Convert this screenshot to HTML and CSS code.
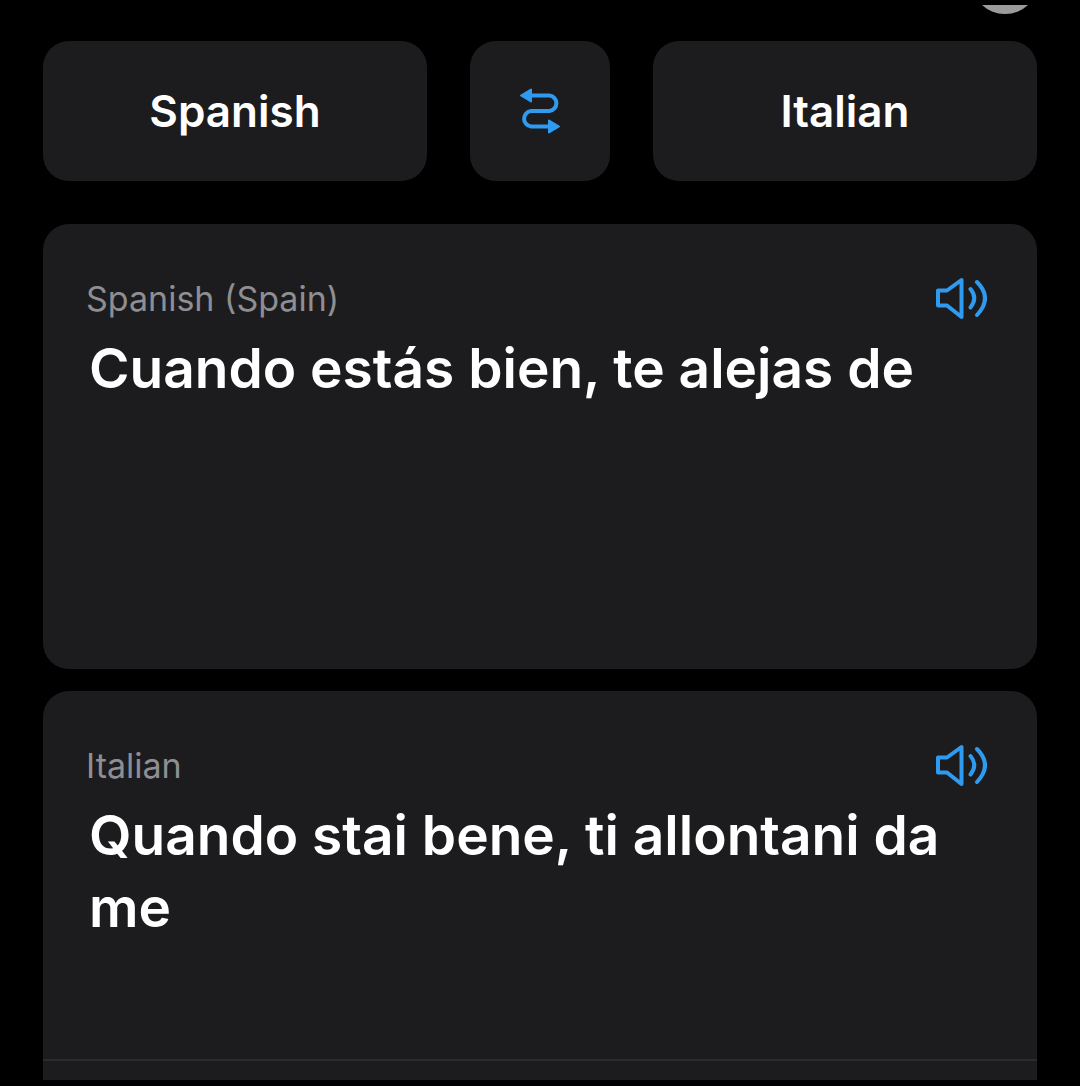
FILE: index.html
```html
<!DOCTYPE html>
<html lang="en">
<head>
    <meta charset="UTF-8">
    <meta name="viewport" content="width=device-width, initial-scale=1.0">
    <title>Translate</title>
    <link rel="stylesheet" href="styles.css">
</head>
<body>

<header class="top-strip">
    <button type="button" class="round-button" aria-label="Close"></button>
</header>

<main class="translator">
    <div class="language-bar">
        <button type="button" class="language">Spanish</button>
        <button type="button" class="swap" aria-label="Swap languages">
            <svg viewBox="0 0 40 46" width="40" height="46">
                <path d="M10 7.5 H29.5 A7.8 7.8 0 0 1 29.5 23 H11 A7.8 7.8 0 0 0 11 38.5 H30" fill="none" stroke="currentColor" stroke-width="4"/>
                <path d="M1 7.5 L11 1.5 V13.5 Z M39 38.5 L29 32.5 V44.5 Z" fill="currentColor" stroke="currentColor" stroke-width="2" stroke-linejoin="round"/>
            </svg>
        </button>
        <button type="button" class="language">Italian</button>
    </div>

    <section class="card source">
        <div class="card-header">
            <span class="card-label">Spanish (Spain)</span>
            <button type="button" class="speak" aria-label="Listen to Spanish">
                <svg viewBox="0 0 52 42" width="52" height="42">
                    <path d="M3 13.5 H12 L26.5 3 V40 L12 28.5 H3 Z M35.5 12 Q43 21 35.5 30.5 M42 5 Q58 21 42 38" fill="none" stroke="currentColor" stroke-width="4" stroke-linejoin="round" stroke-linecap="round"/>
                </svg>
            </button>
        </div>
        <p class="phrase" lang="es">Cuando estás bien, te alejas de</p>
    </section>

    <section class="card result">
        <div class="card-header">
            <span class="card-label">Italian</span>
            <button type="button" class="speak" aria-label="Listen to Italian">
                <svg viewBox="0 0 52 42" width="52" height="42">
                    <path d="M3 13.5 H12 L26.5 3 V40 L12 28.5 H3 Z M35.5 12 Q43 21 35.5 30.5 M42 5 Q58 21 42 38" fill="none" stroke="currentColor" stroke-width="4" stroke-linejoin="round" stroke-linecap="round"/>
                </svg>
            </button>
        </div>
        <p class="phrase" lang="it">Quando stai bene, ti allontani da me</p>
        <div class="card-footer"></div>
    </section>
</main>

</body>
</html>
```
FILE: styles.css
```css
* {
    box-sizing: border-box;
}

body {
    font-family: Inter, "Liberation Sans", sans-serif;
    margin: 0;
    padding: 5px 0 6px;
    min-height: 100vh;
    display: flex;
    flex-direction: column;
    background: #000;
    color: #fff;
}

button {
    font-family: inherit;
    color: inherit;
    border: none;
    padding: 0;
    cursor: pointer;
}

.top-strip {
    position: relative;
    height: 36px;
    overflow: hidden;
}

/* Only the lower edge shows under the top of the screen */
.round-button {
    position: absolute;
    right: 41px;
    bottom: 27px;
    width: 68px;
    height: 68px;
    border-radius: 50%;
    background: #9b9b9b;
}

.translator {
    flex: 1;
    display: flex;
    flex-direction: column;
    padding: 0 43px;
}

.language-bar {
    display: grid;
    grid-template-columns: 1fr 140px 1fr;
    gap: 43px;
    margin-bottom: 43px;
}

.language,
.swap {
    height: 140px;
    border-radius: 26px;
    background: #1c1c1e;
}

.language {
    font-size: 44px;
    font-weight: 600;
}

.swap,
.speak {
    display: flex;
    align-items: center;
    justify-content: center;
    color: #2f9bf0;
}

.card {
    display: flex;
    flex-direction: column;
    background: #1c1c1e;
    border-radius: 26px;
    padding-top: 48px;
}

.source {
    min-height: 445px;
    margin-bottom: 22px;
}

.result {
    flex: 1;
    border-radius: 26px 26px 0 0;
}

.card-header {
    display: flex;
    align-items: center;
    justify-content: space-between;
    height: 52px;
    padding: 0 50px 0 43px;
}

.card-label {
    font-size: 34px;
    color: #8e8e93;
}

.speak {
    background: none;
}

.phrase {
    margin: 8px 0 0;
    padding: 0 46px;
    font-size: 55px;
    font-weight: 600;
    line-height: 72px;
}

.card-footer {
    height: 21px;
    margin-top: auto;
    border-top: 2px solid #2c2c2e;
}
```
